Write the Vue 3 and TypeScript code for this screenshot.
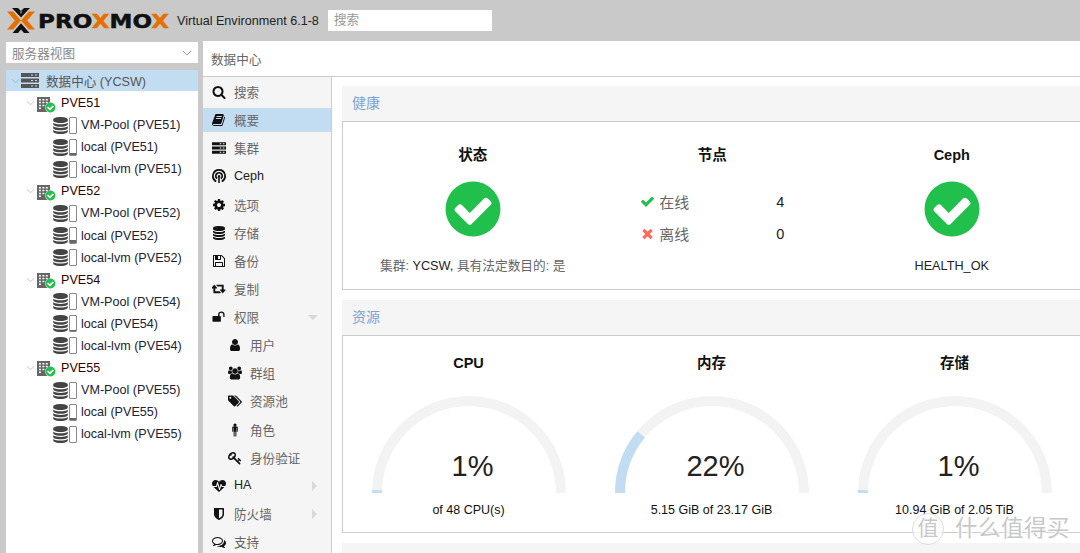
<script setup lang="ts">
interface Icon {
  vb: string;
  d: string;
}

const fa = (d: string, w = 1792): Icon => ({ vb: `0 0 ${w} 1792`, d });

const icons: Record<string, Icon> = {
  search: fa('M1216 832q0-185-131.5-316.5t-316.5-131.5-316.5 131.5-131.5 316.5 131.5 316.5 316.5 131.5 316.5-131.5 131.5-316.5zm512 832q0 52-38 90t-90 38q-54 0-90-38l-343-342q-179 124-399 124-143 0-273.5-55.5t-225-150-150-225-55.5-273.5 55.5-273.5 150-225 225-150 273.5-55.5 273.5 55.5 225 150 150 225 55.5 273.5q0 220-124 399l343 343q37 37 37 90z'),
  book: fa('M1639 478q40 57 18 129l-275 906q-19 64-76.5 107.5t-122.5 43.5h-923q-77 0-148.5-53.5t-99.5-131.5q-24-67-2-127 0-4 3-27t4-37q1-8-3-21.5t-3-19.5q2-11 8-21t16.5-23.5 16.5-23.5q23-38 45-91.5t30-91.5q3-10 .5-30t-.5-28q3-11 17-28t17-23q21-36 42-92t25-90q1-9-2.5-32t.5-28q4-13 22-30.5t22-22.5q19-26 42.5-84.5t27.5-96.5q1-8-3-25.5t-2-26.5q2-8 9-18t18-23 17-21q8-12 16.5-30.5t15-35 16-36 19.5-32 26.5-23.5 36-11.5 47.5 5.5l-1 3q38-9 51-9h761q74 0 114 56t18 130l-274 906q-36 119-71.5 153.5t-128.5 34.5h-869q-27 0-38 15-11 16-1 43 24 70 144 70h923q29 0 56-15.5t35-41.5l300-987q7-22 5-57 38 15 59 43zm-1064 2q-4 13 2 22.5t20 9.5h608q13 0 25.5-9.5t16.5-22.5l21-64q4-13-2-22.5t-20-9.5h-608q-13 0-25.5 9.5t-16.5 22.5zm-83 256q-4 13 2 22.5t20 9.5h608q13 0 25.5-9.5t16.5-22.5l21-64q4-13-2-22.5t-20-9.5h-608q-13 0-25.5 9.5t-16.5 22.5z'),
  server: {
    vb: '0 0 18 15',
    d: 'M0 0h18v4H0zM10 1.4v1.2h2V1.4zM14 1.4v1.2h2V1.4zM0 5.5h18v4H0zM10 6.9v1.2h2V6.9zM14 6.9v1.2h2V6.9zM0 11h18v4H0zM10 12.4v1.2h2v-1.2zM14 12.4v1.2h2v-1.2z',
  },
  cog: fa('M1152 896q0-106-75-181t-181-75-181 75-75 181 75 181 181 75 181-75 75-181zm512-109v222q0 12-8 23t-20 13l-185 28q-19 54-39 91 35 50 107 138 10 12 10 25t-9 23q-27 37-99 108t-94 71q-12 0-26-9l-138-108q-44 23-91 38-16 136-29 186-7 28-36 28h-222q-14 0-24.5-8.5t-11.5-21.5l-28-184q-49-16-90-37l-141 107q-10 9-25 9-14 0-25-11-126-114-165-168-7-10-7-23 0-12 8-23 15-21 51-66.5t54-70.5q-27-50-41-99l-183-27q-13-2-21-12.5t-8-23.5v-222q0-12 8-23t19-13l186-28q14-46 39-92-40-57-107-138-10-12-10-24 0-10 9-23 26-36 98.5-107.5t94.5-71.5q13 0 26 10l138 107q44-23 91-38 16-136 29-186 7-28 36-28h222q14 0 24.5 8.5t11.5 21.5l28 184q49 16 90 37l142-107q9-9 24-9 13 0 25 10 129 119 165 170 7 8 7 22 0 12-8 23-15 21-51 66.5t-54 70.5q26 50 41 98l183 28q13 2 21 12.5t8 23.5z'),
  database: fa('M896 768q237 0 443-43t325-127v170q0 69-103 128t-280 93.5-385 34.5-385-34.5-280-93.5-103-128v-170q119 84 325 127t443 43zm0 768q237 0 443-43t325-127v170q0 69-103 128t-280 93.5-385 34.5-385-34.5-280-93.5-103-128v-170q119 84 325 127t443 43zm0-384q237 0 443-43t325-127v170q0 69-103 128t-280 93.5-385 34.5-385-34.5-280-93.5-103-128v-170q119 84 325 127t443 43zm0-1152q208 0 385 34.5t280 93.5 103 128v128q0 69-103 128t-280 93.5-385 34.5-385-34.5-280-93.5-103-128v-128q0-69 103-128t280-93.5 385-34.5z'),
  save: fa('M512 1536h768v-384h-768v384zm896 0h128v-896q0-14-10-38.5t-20-34.5l-281-281q-10-10-34-20t-39-10v416q0 40-28 68t-68 28h-576q-40 0-68-28t-28-68v-416h-128v1280h128v-416q0-40 28-68t68-28h832q40 0 68 28t28 68v416zm-384-928v-320q0-13-9.5-22.5t-22.5-9.5h-192q-13 0-22.5 9.5t-9.5 22.5v320q0 13 9.5 22.5t22.5 9.5h192q13 0 22.5-9.5t9.5-22.5zm640 32v928q0 40-28 68t-68 28h-1344q-40 0-68-28t-28-68v-1344q0-40 28-68t68-28h928q40 0 88 20t76 48l280 280q28 28 48 76t20 88z'),
  retweet: fa('M1216 1432q0 13-9.5 22.5t-22.5 9.5h-960q-8 0-13.5-2t-9-7-5.5-8-3-11.5-1-11.5v-600h-192q-26 0-45-19t-19-45q0-24 15-41l320-384q19-22 49-22t49 22l320 384q15 17 15 41 0 26-19 45t-45 19h-192v384h576q16 0 25 11l160 192q7 11 7 21zm640-416q0 24-15 41l-320 384q-20 23-49 23t-49-23l-320-384q-15-17-15-41 0-26 19-45t45-19h192v-384h-576q-16 0-25-12l-160-192q-7-9-7-20 0-13 9.5-22.5t22.5-9.5h960q8 0 13.5 2t9 7 5.5 8 3 11.5 1 11.5v600h192q26 0 45 19t19 45z', 1920),
  unlock: fa('M1728 576v256q0 26-19 45t-45 19h-64q-26 0-45-19t-19-45v-256q0-106-75-181t-181-75-181 75-75 181v192h96q40 0 68 28t28 68v576q0 40-28 68t-68 28h-960q-40 0-68-28t-28-68v-576q0-40 28-68t68-28h672v-192q0-185 131.5-316.5t316.5-131.5 316.5 131.5 131.5 316.5z', 1920),
  user: fa('M1536 1399q0 109-62.5 187t-150.5 78h-854q-88 0-150.5-78t-62.5-187q0-85 8.5-160.5t31.5-152 58.5-131 94-89 134.5-34.5q131 128 313 128t313-128q76 0 134.5 34.5t94 89 58.5 131 31.5 152 8.5 160.5zm-256-887q0 159-112.5 271.5t-271.5 112.5-271.5-112.5-112.5-271.5 112.5-271.5 271.5-112.5 271.5 112.5 112.5 271.5z'),
  users: fa('M593 896q-162 5-265 128h-134q-82 0-138-40.5t-56-118.5q0-353 124-353 6 0 43.5 21t97.5 42.5 119 21.5q67 0 133-23-5 37-5 66 0 139 81 256zm1071 637q0 120-73 189.5t-194 69.5h-874q-121 0-194-69.5t-73-189.5q0-53 3.5-103.5t14-109 26.5-108.5 43-97.5 62-81 85.5-53.5 111.5-20q10 0 43 21.5t73 48 107 48 135 21.5 135-21.5 107-48 73-48 43-21.5q61 0 111.5 20t85.5 53.5 62 81 43 97.5 26.5 108.5 14 109 3.5 103.5zm-1024-1277q0 106-75 181t-181 75-181-75-75-181 75-181 181-75 181 75 75 181zm704 384q0 159-112.5 271.5t-271.5 112.5-271.5-112.5-112.5-271.5 112.5-271.5 271.5-112.5 271.5 112.5 112.5 271.5zm576 225q0 78-56 118.5t-138 40.5h-134q-103-123-265-128 81-117 81-256 0-29-5-66 66 23 133 23 59 0 119-21.5t97.5-42.5 43.5-21q124 0 124 353zm-128-609q0 106-75 181t-181 75-181-75-75-181 75-181 181-75 181 75 75 181z', 1920),
  tags: fa('M448 448q0-53-37.5-90.5t-90.5-37.5-90.5 37.5-37.5 90.5 37.5 90.5 90.5 37.5 90.5-37.5 37.5-90.5zm1067 576q0 53-37 90l-491 492q-39 37-91 37-53 0-90-37l-715-716q-38-37-64.5-101t-26.5-117v-416q0-52 38-90t90-38h416q53 0 117 26.5t102 64.5l715 714q37 39 37 91zm384 0q0 53-37 90l-491 492q-39 37-91 37-36 0-59-14t-53-45l470-470q37-37 37-90 0-52-37-91l-715-714q-38-38-102-64.5t-117-26.5h224q53 0 117 26.5t102 64.5l715 714q37 39 37 91z', 1920),
  male: fa('M896 64a200 200 0 1 0 .01 0zM640 448h512q96 0 96 96v512q0 64-64 64t-64-64v-416h-48v1024q0 64-64 64t-64-64v-560h-96v560q0 64-64 64t-64-64v-1024h-48v416q0 64-64 64t-64-64v-512q0-96 96-96z'),
  key: fa('M832 512q0-80-56-136t-136-56-136 56-56 136q0 42 19 83-41-19-83-19-80 0-136 56t-56 136 56 136 136 56 136-56 56-136q0-42-19-83 41 19 83 19 80 0 136-56t56-136zm851 704q0 17-49 66t-66 49q-9 0-28.5-16t-36.5-33-38.5-40-24.5-26l-96 96 220 220q28 28 28 68 0 42-39 81t-81 39q-40 0-68-28l-671-671q-176 131-365 131-163 0-265.5-102.5t-102.5-265.5q0-160 95-313t248-248 313-95q163 0 265.5 102.5t102.5 265.5q0 189-131 365l355 355 96-96q-3-3-26-24.5t-40-38.5-33-36.5-16-28.5q0-17 49-66t66-49q13 0 23 10 6 6 46 44.5t82 79.5 86.5 86 73 78 28.5 41z'),
  heartbeat: fa('M1280 1024h305q-5 6-10 10.5t-9 7.5l-3 4-623 600q-18 18-44 18t-44-18l-624-602q-5-2-21-20h369q22 0 39.5-13.5t22.5-34.5l70-281 190 667q6 20 23 33t39 13q21 0 38-13t23-33l146-485 56 112q18 35 57 35zm512-428q0 145-103 300h-369l-111-221q-8-17-25.5-27t-36.5-8q-45 5-56 46l-129 430-196-686q-6-20-23.5-33t-39.5-13-39 13.5-22 34.5l-116 464h-423q-103-155-103-300 0-220 127-344t351-124q62 0 126.5 21.5t120 58 95.5 68.5 76 68q36-36 76-68t95.5-68.5 120-58 126.5-21.5q224 0 351 124t127 344z'),
  shield: fa('M1344 960v-640h-448v1137q119-63 213-137 235-184 235-360zm192-768v768q0 86-33.5 170.5t-83 150-118 127.5-126.5 103-121 77.5-89.5 49.5-42.5 20q-12 6-26 6t-26-6q-16-7-42.5-20t-89.5-49.5-121-77.5-126.5-103-118-127.5-83-150-33.5-170.5v-768q0-26 19-45t45-19h1152q26 0 45 19t19 45z', 1792),
  comments: fa('M704 384q-153 0-286 52t-211.5 141-78.5 191q0 82 53 158t149 132l97 56-35 84q34-20 62-39l44-31 53 10q78 14 153 14 153 0 286-52t211.5-141 78.5-191-78.5-191-211.5-141-286-52zm0-128q191 0 353.5 68.5t256.5 186.5 94 257-94 257-256.5 186.5-353.5 68.5q-86 0-176-16-124 88-278 128-36 9-86 16h-3q-11 0-20.5-8t-11.5-21q-1-3-1-6.5t.5-6.5 2-6l2.5-5 3.5-5.5 4-5 4.5-5 4-4.5q5-6 23-25t26-29.5 22.5-29 25-38.5 20.5-44q-124-72-195-177t-71-224q0-139 94-257t256.5-186.5 353.5-68.5zm822 1169q10 24 20.5 44t25 38.5 22.5 29 26 29.5 23 25q1 1 4 4.5t4.5 5 4 5 3.5 5.5l2.5 5 2 6 .5 6.5-1 6.5q-3 14-13 22t-22 7q-50-7-86-16-154-40-278-128-90 16-176 16-271 0-472-132 58 4 88 4 161 0 309-45t264-129q125-92 192-212t67-254q0-77-23-152 129 71 204 178t75 230q0 120-71 224.5t-195 176.5z'),
  ceph: {
    vb: '0 0 16 16',
    d: 'M8 0a8 8 0 0 1 3.6 15.1l-.9-1.8a6 6 0 1 0-5.4 0l-.9 1.8A8 8 0 0 1 8 0zM8 3.4a4.6 4.6 0 0 1 2.6 8.4l-1.1-1.7a2.6 2.6 0 1 0-3 0l-1.1 1.7A4.6 4.6 0 0 1 8 3.4zM8 6.8a1.4 1.4 0 0 1 .9 2.5V16H7.1V9.3A1.4 1.4 0 0 1 8 6.8z',
  },
};

const check = fa('M1671 566q0 40-28 68l-724 724-136 136q-28 28-68 28t-68-28l-136-136-362-362q-28-28-28-68t28-68l136-136q28-28 68-28t68 28l294 295 656-657q28-28 68-28t68 28l136 136q28 28 28 68z');
const times = fa('M1490 1322q0 40-28 68l-136 136q-28 28-68 28t-68-28l-294-294-294 294q-28 28-68 28t-68-28l-136-136q-28-28-28-68t28-68l294-294-294-294q-28-28-28-68t28-68l136-136q28-28 68-28t68 28l294 294 294-294q28-28 68-28t68 28l136 136q28 28 28 68t-28 68l-294 294 294 294q28 28 28 68z');
const checkCircle = fa('M1412 734q0-28-18-46l-91-90q-19-19-45-19t-45 19l-408 407-226-226q-19-19-45-19t-45 19l-91 90q-18 18-18 46 0 27 18 45l362 362q19 19 45 19 27 0 46-19l543-543q18-18 18-45zm252 162q0 209-103 385.5t-279.5 279.5-385.5 103-385.5-103-279.5-279.5-103-385.5 103-385.5 279.5-279.5 385.5-103 385.5 103 279.5 279.5 103 385.5z');

// building windows, three columns by four rows
const buildingPath = (() => {
  let d = 'M0 0h13v16H0z';
  for (let row = 0; row < 4; row++) {
    for (let col = 0; col < 3; col++) {
      if (row === 3 && col === 1) continue;
      d += `M${2 + col * 3.4} ${2 + row * 3.1}h1.9v1.6h-1.9z`;
    }
  }
  return d;
})();

interface NavItem {
  label: string;
  icon: string;
  sub?: boolean;
  active?: boolean;
  latin?: boolean;
  caret?: 'down' | 'right';
}

const navItems: NavItem[] = [
  { label: '搜索', icon: 'search' },
  { label: '概要', icon: 'book', active: true },
  { label: '集群', icon: 'server' },
  { label: 'Ceph', icon: 'ceph', latin: true },
  { label: '选项', icon: 'cog' },
  { label: '存储', icon: 'database' },
  { label: '备份', icon: 'save' },
  { label: '复制', icon: 'retweet' },
  { label: '权限', icon: 'unlock', caret: 'down' },
  { label: '用户', icon: 'user', sub: true },
  { label: '群组', icon: 'users', sub: true },
  { label: '资源池', icon: 'tags', sub: true },
  { label: '角色', icon: 'male', sub: true },
  { label: '身份验证', icon: 'key', sub: true },
  { label: 'HA', icon: 'heartbeat', latin: true, caret: 'right' },
  { label: '防火墙', icon: 'shield', caret: 'right' },
  { label: '支持', icon: 'comments' },
];

const nodes = [
  { name: 'PVE51', used: [0, 12, 0] },
  { name: 'PVE52', used: [0, 22, 0] },
  { name: 'PVE54', used: [0, 12, 0] },
  { name: 'PVE55', used: [0, 12, 0] },
];
const storages = ['VM-Pool', 'local', 'local-lvm'];

interface Gauge {
  title: string;
  percent: number;
  text: string;
}

const gauges: Gauge[] = [
  { title: 'CPU', percent: 1, text: 'of 48 CPU(s)' },
  { title: '内存', percent: 22, text: '5.15 GiB of 23.17 GiB' },
  { title: '存储', percent: 1, text: '10.94 GiB of 2.05 TiB' },
];

const R = 92;
const CX = 97;
const CY = 97;

const arcPath = (percent: number) => {
  const a = Math.PI * (percent / 100);
  const x = CX - R * Math.cos(a);
  const y = CY - R * Math.sin(a);
  return `M${CX - R} ${CY}A${R} ${R} 0 0 1 ${x.toFixed(2)} ${y.toFixed(2)}`;
};
</script>

<template>
  <div class="app">
    <header class="topbar">
      <svg class="logo-mark" viewBox="0 0 28 25" width="28" height="25">
        <path d="M5 0h6l4 4-3 3zM23 0h-6l-4 4 3 3z" fill="#111" />
        <path d="M5.500 25h5.500l3-3.400 3 3.400h5.500l-8.500-9.800z" fill="#111" />
        <path d="M14 9.500 8.500 3.200 11 2.500 14 6l3-3.500 2.500.7z" fill="#111" />
        <path d="M0 3.500h6.200L14 12.500 6.200 21.500H0l7.800-9z" fill="#e57000" />
        <path d="M28 3.500h-6.200L14 12.500l7.800 9H28l-7.800-9z" fill="#e57000" />
      </svg>
      <div class="logo-wrap"><div class="logo-text">PRO<span class="o">X</span>MO<span class="o">X</span></div></div>
      <div class="version">Virtual Environment 6.1-8</div>
      <div class="search-box">搜索</div>
    </header>

    <div class="layout">
      <aside class="side">
        <div class="combo">
          <span>服务器视图</span>
          <svg class="combo-arrow" viewBox="0 0 10 6" width="10" height="6"><path d="M1 1l4 4 4-4" fill="none" stroke="#999" /></svg>
        </div>
        <div class="tree">
          <div class="row root">
            <svg class="chev" viewBox="0 0 10 6" width="9" height="6"><path d="M1 1l4 4 4-4" fill="none" stroke="#9fb4c4" /></svg>
            <svg class="dc-icon" :viewBox="icons.server.vb" width="18" height="15"><path :d="icons.server.d" fill="#555" fill-rule="evenodd" /></svg>
            <span class="cjk-dim">数据中心 (YCSW)</span>
          </div>
          <template v-for="node in nodes" :key="node.name">
            <div class="row node">
              <svg class="chev" viewBox="0 0 10 6" width="9" height="6"><path d="M1 1l4 4 4-4" fill="none" stroke="#bbb" /></svg>
              <span class="building">
                <svg viewBox="0 0 13 16" width="13" height="15" preserveAspectRatio="none"><path :d="buildingPath" fill="#666" fill-rule="evenodd" /></svg>
                <svg class="badge" :viewBox="checkCircle.vb" width="11" height="11"><circle cx="896" cy="896" r="860" fill="#fff" /><path :d="checkCircle.d" fill="#21bf4b" transform="translate(896 896) scale(1.05) translate(-896 -896)" /></svg>
              </span>
              <span class="node-name">{{ node.name }}</span>
            </div>
            <div v-for="(s, i) in storages" :key="s" class="row store">
              <svg class="db" :viewBox="icons.database.vb" width="17" height="17"><path :d="icons.database.d" fill="#444" /></svg>
              <span class="usage"><i :style="{ height: node.used[i] + '%' }"></i></span>
              <span>{{ s }} ({{ node.name }})</span>
            </div>
          </template>
        </div>
      </aside>

      <main class="main">
        <div class="main-head">数据中心</div>
        <div class="main-body">
          <nav class="nav">
            <div
              v-for="item in navItems"
              :key="item.label"
              class="nav-item"
              :class="{ sub: item.sub, active: item.active, latin: item.latin }"
            >
              <svg class="nav-icon" :viewBox="icons[item.icon].vb" width="14" height="14"><path :d="icons[item.icon].d" fill="#111" fill-rule="evenodd" /></svg>
              <span class="nav-label">{{ item.label }}</span>
              <span v-if="item.caret" class="caret" :class="item.caret"></span>
            </div>
          </nav>

          <section class="content">
            <div class="panel">
              <div class="panel-title">健康</div>
              <div class="panel-body health">
                <div class="col">
                  <div class="col-title">状态</div>
                  <svg class="big-check" :viewBox="checkCircle.vb" width="64" height="64"><path :d="checkCircle.d" fill="#21bf4b" fill-rule="evenodd" /></svg>
                  <div class="col-note dim">集群: <span class="dark">YCSW,</span> 具有法定数目的: 是</div>
                </div>
                <div class="col">
                  <div class="col-title">节点</div>
                  <div class="node-stats">
                    <div class="stat">
                      <svg :viewBox="check.vb" width="15" height="15"><path :d="check.d" fill="#21bf4b" /></svg>
                      <span class="stat-label">在线</span>
                      <span class="stat-val">4</span>
                    </div>
                    <div class="stat">
                      <svg :viewBox="times.vb" width="15" height="15"><path :d="times.d" fill="#ff6c59" /></svg>
                      <span class="stat-label">离线</span>
                      <span class="stat-val">0</span>
                    </div>
                  </div>
                </div>
                <div class="col">
                  <div class="col-title">Ceph</div>
                  <svg class="big-check" :viewBox="checkCircle.vb" width="64" height="64"><path :d="checkCircle.d" fill="#21bf4b" fill-rule="evenodd" /></svg>
                  <div class="col-note">HEALTH_OK</div>
                </div>
              </div>
            </div>

            <div class="panel">
              <div class="panel-title">资源</div>
              <div class="panel-body resources">
                <div v-for="g in gauges" :key="g.title" class="gauge">
                  <div class="col-title">{{ g.title }}</div>
                  <div class="gauge-dial">
                    <svg viewBox="0 0 194 97" width="194" height="97">
                      <path :d="`M${CX - R} ${CY}A${R} ${R} 0 0 1 ${CX + R} ${CY}`" fill="none" stroke="#f3f3f3" stroke-width="10" />
                      <path :d="arcPath(g.percent)" fill="none" stroke="#c2ddf2" stroke-width="10" />
                    </svg>
                    <div class="gauge-pct">{{ g.percent }}%</div>
                  </div>
                  <div class="gauge-text">{{ g.text }}</div>
                </div>
              </div>
            </div>

            <div class="panel">
              <div class="panel-title"></div>
            </div>
          </section>
        </div>
      </main>
    </div>

    <div class="watermark">
      <span class="wm-circle">值</span>
      <span class="wm-text">什么值得买</span>
    </div>
  </div>
</template>

<style>
html,
body {
  margin: 0;
  overflow: hidden;
}
</style>

<style scoped>
.app {
  position: relative;
  width: 1080px;
  height: 553px;
  overflow: hidden;
  display: flex;
  flex-direction: column;
  background: #c9c9c9;
  font-family: "Liberation Sans", "Noto Sans CJK SC", sans-serif;
  font-size: 12.6px;
  color: #222;
}

.topbar {
  height: 41px;
  flex: none;
  display: flex;
  align-items: center;
  padding-left: 7px;
  box-sizing: border-box;
}

.logo-mark {
  flex: none;
}

.logo-wrap {
  margin-left: 3px;
  width: 131px;
  flex: none;
}

.logo-text {
  font-family: "DejaVu Sans", sans-serif;
  font-weight: 700;
  font-size: 19px;
  letter-spacing: 0.1px;
  white-space: nowrap;
  color: #111;
  transform: scaleX(1.21);
  transform-origin: left center;
  -webkit-text-stroke: 0.5px currentColor;
}

.logo-text .o {
  color: #e57000;
}

.version {
  margin-left: 8px;
  color: #222;
}

.search-box {
  margin-left: 9px;
  width: 164px;
  height: 21px;
  line-height: 21px;
  padding-left: 6px;
  box-sizing: border-box;
  background: #fff;
  color: #999;
}

.layout {
  flex: 1;
  min-height: 0;
  display: flex;
}

.side {
  width: 192px;
  margin-left: 6px;
  flex: none;
  display: flex;
  flex-direction: column;
  padding-top: 1px;
  box-sizing: border-box;
}

.combo {
  height: 21px;
  flex: none;
  background: #fff;
  display: flex;
  align-items: center;
  justify-content: space-between;
  padding: 0 6px;
  color: #888;
}

.tree {
  margin-top: 7px;
  flex: 1;
  background: #fff;
}

.row {
  height: 22.08px;
  display: flex;
  align-items: center;
  white-space: nowrap;
  color: #223;
}

.row.root {
  background: #c2ddf2;
  padding-left: 5px;
  height: 21px;
  margin-bottom: 1px;
}

.cjk-dim {
  color: #555;
  margin-left: 7px;
}

.dc-icon {
  margin-left: 1px;
}

.row.node {
  padding-left: 20px;
}

.building {
  position: relative;
  margin-left: 2px;
  margin-top: 2px;
  width: 13px;
  height: 15px;
  flex: none;
}

.building svg {
  display: block;
}

.building .badge {
  position: absolute;
  left: 8px;
  top: 5px;
}

.node-name {
  margin-left: 11px;
  color: #300;
}

.row.store {
  padding-left: 46px;
}

.usage {
  width: 6px;
  height: 15px;
  margin-right: 4px;
  flex: none;
  border: 1px solid #888;
  border-radius: 1px;
  background: #fff;
  display: flex;
  align-items: flex-end;
}

.usage i {
  display: block;
  width: 100%;
  background: #666;
}

.main {
  flex: 1;
  min-width: 0;
  margin-left: 5px;
  display: flex;
  flex-direction: column;
}

.main-head {
  height: 35px;
  flex: none;
  background: #fff;
  display: flex;
  align-items: center;
  padding-left: 8px;
  padding-bottom: 0;
  color: #666;
  border-bottom: 1px solid #ccc;
}

.main-body {
  flex: 1;
  min-height: 0;
  display: flex;
  background: #fff;
}

.nav {
  width: 128px;
  flex: none;
  background: #f5f5f5;
  border-right: 1px solid #ccc;
  padding-top: 3px;
  overflow: hidden;
}

.nav-item {
  height: 24.13px;
  margin-bottom: 4px;
  display: flex;
  align-items: center;
  padding-left: 9px;
  color: #666;
}

.nav-item.latin {
  color: #222;
}

.nav-item.active {
  background: #c2ddf2;
}

.nav-item.sub {
  padding-left: 25px;
}

.nav-label {
  margin-left: 8px;
  margin-top: -1px;
}

.nav-icon {
  flex: none;
}

.caret {
  margin-left: auto;
  margin-right: 14px;
  width: 0;
  height: 0;
  border-style: solid;
}

.caret.down {
  border-width: 5px 5px 0;
  margin-right: 13px;
  border-color: #d8d8d8 transparent transparent;
}

.caret.right {
  border-width: 5px 0 5px 5px;
  border-color: transparent transparent transparent #d8d8d8;
}

.content {
  flex: 1;
  min-width: 0;
  padding: 9px 0 0 10px;
  overflow: hidden;
}

.panel {
  margin-bottom: 10px;
}

.panel-title {
  height: 35px;
  line-height: 35px;
  background: #f5f5f5;
  padding-left: 10px;
  color: #7ba3d4;
  font-size: 14px;
}

.panel-body {
  border: 1px solid #ccc;
  border-width: 1px 0 1px 1px;
  box-sizing: border-box;
  background: #fff;
}

.health {
  height: 169px;
  display: grid;
  grid-template-columns: repeat(3, 239.5px);
  padding-left: 10px;
}

.col {
  display: flex;
  flex-direction: column;
  align-items: center;
}

.col-title {
  margin-top: 24px;
  font-weight: 700;
  font-size: 14.5px;
  line-height: 18px;
  color: #111;
}

.big-check {
  margin-top: 13px;
}

.col-note {
  margin-top: 17px;
  line-height: 16px;
  font-size: 12.7px;
  color: #222;
}

.dim {
  color: #666;
}

.dark {
  color: #222;
}

.node-stats {
  margin-top: 21px;
  width: 144px;
}

.stat {
  height: 32.5px;
  display: flex;
  align-items: center;
  font-size: 15px;
}

.stat-label {
  margin-left: 4px;
  color: #666;
}

.stat-val {
  margin-left: auto;
  padding-top: 1px;
  color: #222;
  font-size: 14.5px;
}

.resources {
  height: 198px;
  display: grid;
  grid-template-columns: repeat(3, 243px);
  padding-left: 4px;
}

.gauge {
  display: flex;
  flex-direction: column;
  align-items: center;
}

.gauge .col-title {
  margin-top: 18px;
}

.gauge-dial {
  position: relative;
  width: 194px;
  height: 97px;
  margin-top: 24px;
}

.gauge-dial svg {
  display: block;
}

.gauge-pct {
  position: absolute;
  left: 4px;
  right: -4px;
  top: 53px;
  text-align: center;
  font-size: 29px;
  line-height: 34px;
  color: #222;
}

.gauge-text {
  margin-top: 9px;
  line-height: 16px;
  font-size: 12.5px;
  color: #111;
}

.watermark {
  position: absolute;
  left: 912px;
  top: 513px;
  display: flex;
  align-items: center;
  color: #c8c8c8;
  text-shadow: 0 0 3px #fff, 0 0 3px #fff, 0 0 2px #fff;
}

.wm-circle {
  width: 30px;
  height: 30px;
  line-height: 28px;
  text-align: center;
  font-size: 21px;
  border: 1px solid #ddd;
  border-radius: 50%;
  background: rgba(255, 255, 255, 0.75);
}

.wm-text {
  margin-left: 11px;
  font-size: 22.5px;
  letter-spacing: 0.5px;
  line-height: 30px;
}
</style>
